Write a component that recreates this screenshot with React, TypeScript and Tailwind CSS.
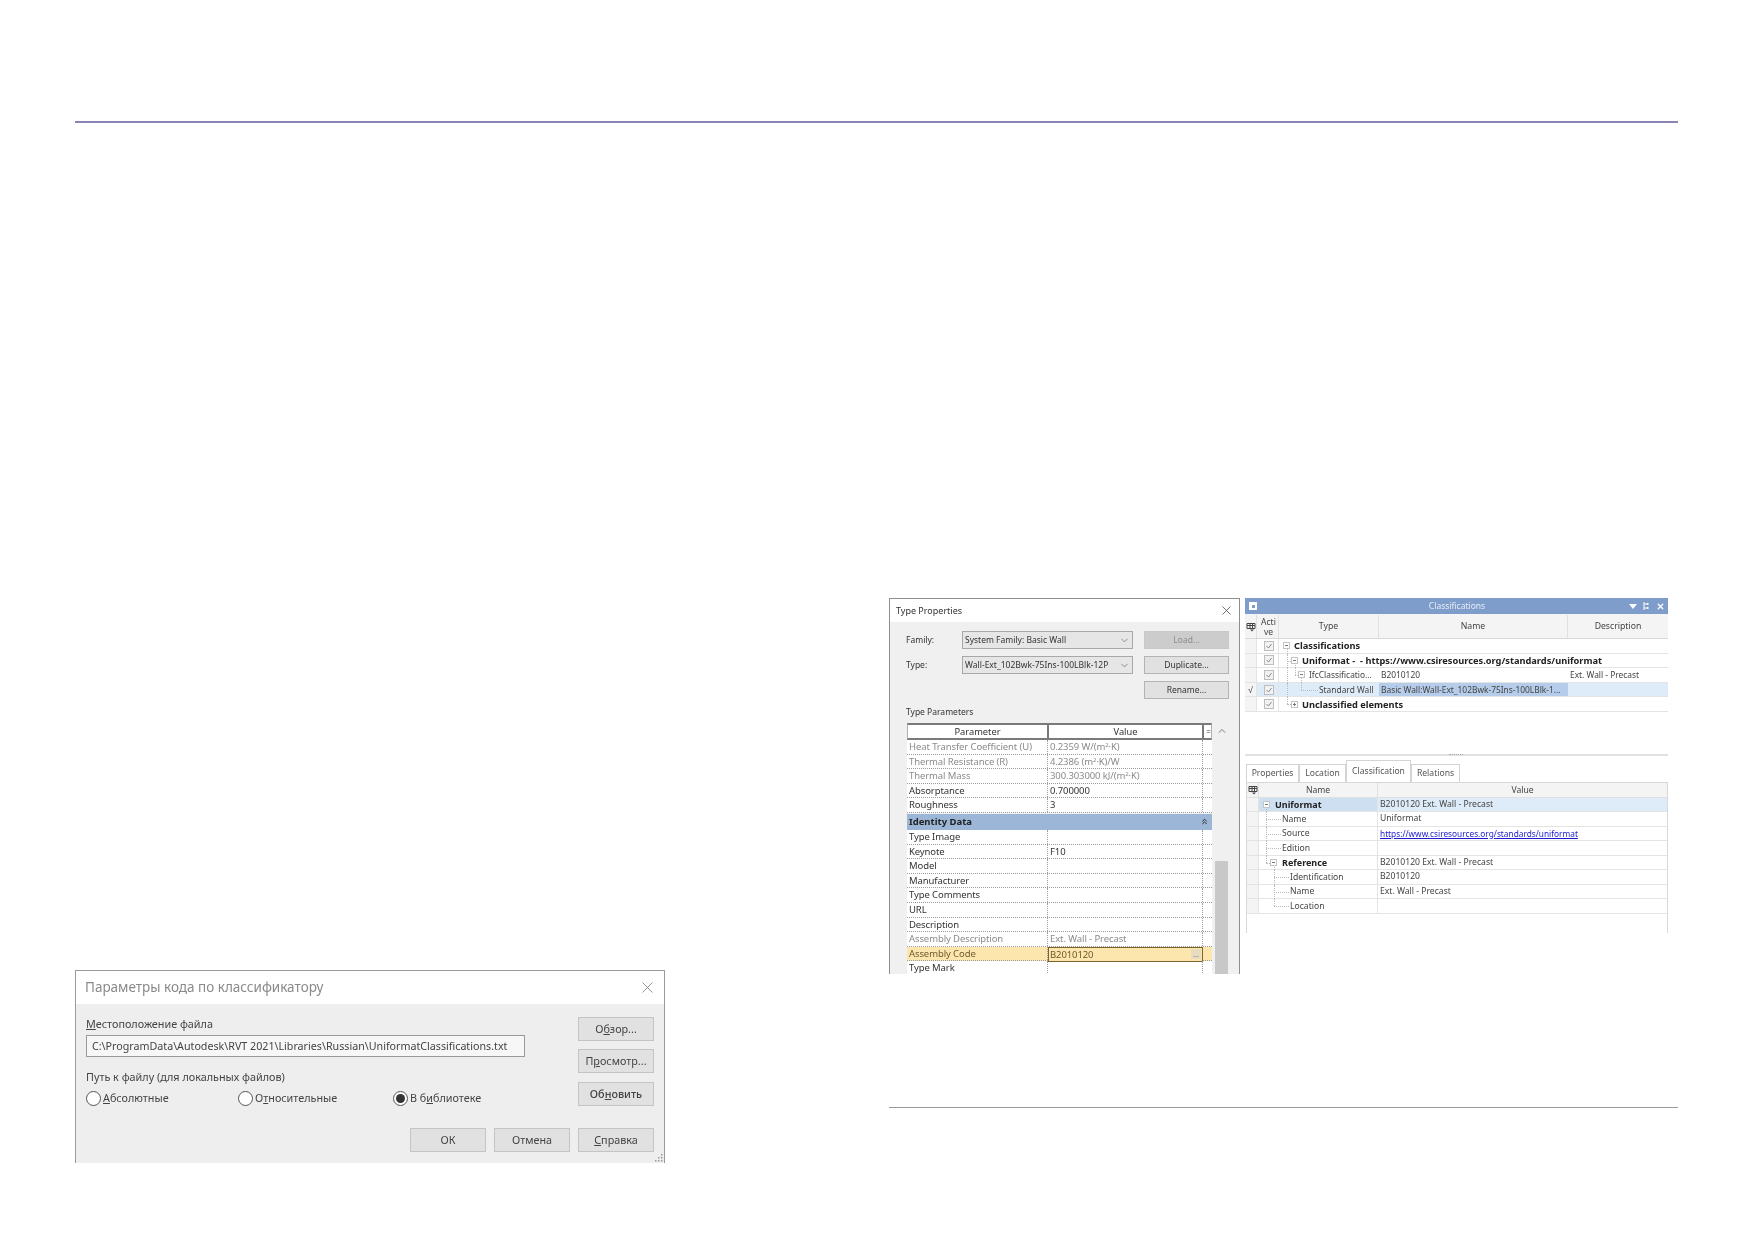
import { ChevronDown, ChevronUp, ChevronsUp, X } from "lucide-react";

const typeRows = [
  { name: "Heat Transfer Coefficient (U)", value: <>0.2359 W/(m<sup className="text-[6px]">2</sup>·K)</>, muted: true },
  { name: "Thermal Resistance (R)", value: <>4.2386 (m<sup className="text-[6px]">2</sup>·K)/W</>, muted: true },
  { name: "Thermal Mass", value: <>300.303000 kJ/(m<sup className="text-[6px]">2</sup>·K)</>, muted: true },
  { name: "Absorptance", value: "0.700000" },
  { name: "Roughness", value: "3" },
];

const identityRows = [
  { name: "Type Image", value: "" },
  { name: "Keynote", value: "F10" },
  { name: "Model", value: "" },
  { name: "Manufacturer", value: "" },
  { name: "Type Comments", value: "" },
  { name: "URL", value: "" },
  { name: "Description", value: "" },
  { name: "Assembly Description", value: "Ext. Wall - Precast", muted: true },
];

function DialogButton({ label, className }: { label: React.ReactNode; className: string }) {
  return (
    <div className={`flex h-[24px] w-[76px] items-center justify-center border border-[#c4c4c4] bg-[#e1e1e1] text-[10.8px] text-[#444] ${className}`}>
      {label}
    </div>
  );
}

function Radio({ label, checked, className }: { label: React.ReactNode; checked?: boolean; className: string }) {
  return (
    <div className={`flex items-center gap-[2px] ${className}`}>
      <span className="flex h-[15px] w-[15px] items-center justify-center rounded-full border border-[#555] bg-white">
        {checked && <span className="h-[9px] w-[9px] rounded-full bg-[#333]" />}
      </span>
      <span className="text-[10.8px] text-[#444]">{label}</span>
    </div>
  );
}

function ClassifierDialog() {
  return (
    <div className="relative h-[193px] w-[590px] border-x border-t border-[#9a9a9a] bg-[#eeeeee] blur-[0.4px]">
      <div className="flex h-[33px] items-center justify-between bg-white pl-[9px] pr-[7px]">
        <span className="text-[13.5px] text-[#8a8a8a]">Параметры кода по классификатору</span>
        <X size={19} strokeWidth={1} className="text-[#777]" />
      </div>
      <div className="flex pl-[10px] pr-[10px]">
        <div className="w-[492px]">
          <div className="mt-[12px] text-[10.8px] leading-[16px] text-[#444]"><u>М</u>естоположение файла</div>
          <div className="mt-[3px] flex h-[22px] w-[439px] items-center border border-[#999] bg-[#f7f7f7] pl-[5px] text-[10.7px] whitespace-nowrap text-[#444]">
            C:\ProgramData\Autodesk\RVT 2021\Libraries\Russian\UniformatClassifications.txt
          </div>
          <div className="mt-[12px] text-[10.8px] leading-[16px] text-[#444]">Путь к файлу (для локальных файлов)</div>
          <div className="mt-[5px] flex">
            <Radio className="w-[152px]" label={<><u>А</u>бсолютные</>} />
            <Radio className="w-[155px]" label={<>О<u>т</u>носительные</>} />
            <Radio className="w-[150px]" checked label={<>В б<u>и</u>блиотеке</>} />
          </div>
        </div>
        <div className="flex flex-col gap-[8px] pt-[13px]">
          <DialogButton className="" label={<>О<u>б</u>зор...</>} />
          <DialogButton className="" label={<>П<u>р</u>осмотр...</>} />
          <DialogButton className="mt-[1px] font-medium" label={<>Об<u>н</u>овить</>} />
        </div>
      </div>
      <div className="mt-[22px] flex justify-end gap-[8px] pr-[10px]">
        <DialogButton className="" label="ОК" />
        <DialogButton className="" label="Отмена" />
        <DialogButton className="" label={<><u>С</u>правка</>} />
      </div>
      <svg width="9" height="9" viewBox="0 0 9 9" className="absolute bottom-[1px] right-[1px] text-[#999]">
        <path d="M7 1h1.5v1.5H7zM4 4h1.5v1.5H4zM7 4h1.5v1.5H7zM1 7h1.5v1.5H1zM4 7h1.5v1.5H4zM7 7h1.5v1.5H7z" fill="currentColor" />
      </svg>
    </div>
  );
}

function FamilySelect({ value }: { value: string }) {
  return (
    <div className="flex h-[18px] w-[171px] items-center justify-between border border-[#a8a8a8] bg-[#e6e6e6] pl-[2px] pr-[2px] text-[8.5px] whitespace-nowrap text-[#333]">
      {value}
      <ChevronDown size={11} strokeWidth={1.5} className="text-[#666]" />
    </div>
  );
}

function SmallButton({ label, disabled }: { label: string; disabled?: boolean }) {
  return (
    <div className={`flex h-[18px] w-[85px] items-center justify-center border text-[8.5px] ${disabled ? "border-[#c8c8c8] bg-[#cccccc] text-[#8d8d8d]" : "border-[#b4b4b4] bg-[#e1e1e1] text-[#333]"}`}>
      {label}
    </div>
  );
}

function ParamRow({ name, value, muted, active }: { name: string; value?: React.ReactNode; muted?: boolean; active?: boolean }) {
  const text = muted ? "text-[#8b8b8b]" : "text-[#333]";
  return (
    <div className={`grid h-[14.6px] grid-cols-[141px_155px_9px] border-b border-dotted border-[#9c9c9c] text-[9.5px] leading-[13px] tracking-[-0.1px] ${active ? "bg-[#fde6ae] text-[#6d5a2e]" : `bg-white ${text}`}`}>
      <div className="border-r border-dotted border-[#9c9c9c] pl-[2px] whitespace-nowrap">{name}</div>
      {active ? (
        <div className="flex items-center justify-between border border-[#7a6428] bg-[#fde6ae] pl-[1px] pr-[1px]">
          {value}
          <span className="flex h-[10px] w-[10px] items-center justify-center bg-[#e8dcc0] text-[7px] text-[#888]">...</span>
        </div>
      ) : (
        <div className="border-r border-dotted border-[#9c9c9c] pl-[2px] whitespace-nowrap">{value}</div>
      )}
      <div />
    </div>
  );
}

function TypeProperties() {
  return (
    <div className="h-[376px] w-[351px] overflow-hidden border-x border-t border-[#8e8e8e] bg-[#f0f0f0] blur-[0.3px]">
      <div className="flex h-[23px] items-center justify-between bg-white pl-[6px] pr-[5px]">
        <span className="text-[9px] text-[#333]">Type Properties</span>
        <X size={15} strokeWidth={1.2} className="text-[#444]" />
      </div>
      <div className="flex pl-[16px] pt-[9px]">
        <div className="flex w-[228px] flex-col gap-[7px]">
          <div className="flex items-center">
            <span className="w-[56px] text-[8.5px] text-[#333]">Family:</span>
            <FamilySelect value="System Family: Basic Wall" />
          </div>
          <div className="flex items-center">
            <span className="w-[56px] text-[8.5px] text-[#333]">Type:</span>
            <FamilySelect value="Wall-Ext_102Bwk-75Ins-100LBlk-12P" />
          </div>
        </div>
        <div className="ml-[10px] flex flex-col gap-[7px]">
          <SmallButton label="Load..." disabled />
          <SmallButton label="Duplicate..." />
          <SmallButton label="Rename..." />
        </div>
      </div>
      <div className="mt-[6px] pl-[16px] text-[8.5px] leading-[14px] text-[#333]">Type Parameters</div>
      <div className="mt-[4px] flex pl-[17px]">
        <div className="w-[305px]">
          <div className="grid h-[17px] grid-cols-[141px_155px_9px] border-y-2 border-x border-y-[#7a7a7a] border-x-[#b0b0b0] bg-white text-center text-[9.3px] leading-[13px] text-[#333]">
            <div className="border-r-2 border-[#7a7a7a]">Parameter</div>
            <div className="border-r-2 border-[#7a7a7a]">Value</div>
            <div className="text-[8px]">=</div>
          </div>
          {typeRows.map((r) => (
            <ParamRow key={r.name} {...r} />
          ))}
          <div className="mt-[1px] flex h-[16px] items-center justify-between bg-[#9bb6d6] pl-[2px] pr-[3px] text-[9.5px] font-bold text-[#222]">
            Identity Data
            <ChevronsUp size={9} strokeWidth={2.5} />
          </div>
          {identityRows.map((r) => (
            <ParamRow key={r.name} {...r} />
          ))}
          <ParamRow name="Assembly Code" value="B2010120" active />
          <ParamRow name="Type Mark" value="" />
        </div>
        <div className="ml-[3px] flex h-[260px] w-[13px] flex-col">
          <ChevronUp size={12} strokeWidth={1.5} className="mx-auto mt-[2px] shrink-0 text-[#555]" />
          <div className="mt-[124px] flex-1 bg-[#c8c8c8]" />
        </div>
      </div>
    </div>
  );
}

function GridIcon() {
  return (
    <svg width="10" height="10" viewBox="0 0 10 10" className="text-[#444]">
      <path d="M1 1.5h8v5H1zM1 3.5h8M4 1.5v5M6.5 1.5v5" fill="none" stroke="currentColor" />
      <path d="M4 7.5h4L6 9.5z" fill="currentColor" />
    </svg>
  );
}

function Expander({ plus }: { plus?: boolean }) {
  return (
    <span className="relative z-10 flex h-[7px] w-[7px] shrink-0 items-center justify-center border border-[#c4c4c4] bg-white">
      <span className="h-[1px] w-[3px] bg-[#777]" />
      {plus && <span className="absolute h-[3px] w-[1px] bg-[#777]" />}
    </span>
  );
}

// dotted tree connectors, in px from the left of the cell
function Guides({ v = [], h = [] }: { v?: number[][]; h?: number[][] }) {
  return (
    <>
      {v.map(([x, y0, y1]) => (
        <span key={`v${x}`} className="absolute border-l border-dotted border-[#bbbbbb]" style={{ left: x, top: y0, height: y1 - y0 }} />
      ))}
      {h.map(([x0, x1]) => (
        <span key={`h${x0}`} className="absolute top-[7px] border-t border-dotted border-[#bbbbbb]" style={{ left: x0, width: x1 - x0 }} />
      ))}
    </>
  );
}

type TreeRowProps = {
  indent: number;
  label: string;
  bold?: boolean;
  expander?: boolean;
  plus?: boolean;
  name?: string;
  desc?: string;
  marker?: boolean;
  selected?: boolean;
  span?: boolean;
  v?: number[][];
  h?: number[][];
};

function TreeRow({ indent, label, bold, expander, plus, name, desc, marker, selected, span, v, h }: TreeRowProps) {
  return (
    <div className={`grid h-[14.6px] grid-cols-[12px_22px_100px_189px_100px] border-b border-[#e4e4e4] text-[8.4px] leading-[13px] text-[#444] ${selected ? "bg-[#deecf9]" : ""}`}>
      <div className="border-r border-[#e4e4e4] bg-[#f4f4f4] pl-[3px] text-[9px]">{marker && "√"}</div>
      <div className="flex items-center justify-center border-r border-[#e4e4e4] pl-[3px]">
        <span className="flex h-[10px] w-[10px] items-center justify-center border border-[#bdbdbd] bg-[#f2f2f2]">
          <svg width="8" height="8" viewBox="0 0 8 8"><path d="M1.5 4l2 2 3-4" fill="none" stroke="#8a8a8a" /></svg>
        </span>
      </div>
      {span ? (
        <div className={`relative col-span-3 flex items-center gap-[4px] whitespace-pre ${bold ? "text-[9.25px] font-bold text-[#222]" : ""}`} style={{ paddingLeft: indent }}>
          <Guides v={v} h={h} />
          {expander && <Expander plus={plus} />}
          {label}
        </div>
      ) : (
        <>
          <div className="relative flex items-center gap-[4px] whitespace-nowrap" style={{ paddingLeft: indent }}>
            <Guides v={v} h={h} />
            {expander && <Expander plus={plus} />}
            {label}
          </div>
          <div className={`pl-[2px] whitespace-nowrap ${selected ? "bg-[#b5cdea]" : ""}`}>{name}</div>
          <div className="pl-[2px] whitespace-nowrap">{desc}</div>
        </>
      )}
    </div>
  );
}

type PropRowProps = {
  indent: number;
  label: string;
  value?: string;
  bold?: boolean;
  expander?: boolean;
  selected?: boolean;
  link?: boolean;
  v?: number[][];
  h?: number[][];
};

function PropRow({ indent, label, value, bold, expander, selected, link, v, h }: PropRowProps) {
  return (
    <div className={`grid h-[14.5px] grid-cols-[12px_119px_1fr] border-b border-[#e4e4e4] text-[8.6px] leading-[13px] text-[#444] ${selected ? "bg-[#deecf9]" : ""}`}>
      <div className="border-r border-[#e4e4e4] bg-[#f4f4f4]" />
      <div className={`relative flex items-center gap-[5px] whitespace-nowrap border-r border-[#e4e4e4] ${bold ? "text-[9px] font-bold text-[#222]" : ""} ${selected ? "bg-[#cfdff2]" : ""}`} style={{ paddingLeft: indent }}>
        <Guides v={v} h={h} />
        {expander && <Expander />}
        {label}
      </div>
      <div className={`pl-[2px] whitespace-nowrap ${link ? "text-[8.3px] text-[#1a1ad0] underline" : ""}`}>{value}</div>
    </div>
  );
}

function ClassificationsPanel() {
  const tabs = [
    { label: "Properties", cls: "h-[18px] w-[53px]" },
    { label: "Location", cls: "h-[18px] w-[47px]" },
    { label: "Classification", cls: "h-[22px] w-[65px]" },
    { label: "Relations", cls: "h-[18px] w-[49px]" },
  ];
  return (
    <div className="w-[423px] bg-white blur-[0.3px]">
      <div className="grid h-[16px] grid-cols-[1fr_auto_1fr] items-center bg-[#7f9dcb] pl-[4px] pr-[3px] text-[8.5px] text-[#e6ecf6]">
        <span className="flex h-[8px] w-[8px] items-center justify-center bg-white"><span className="h-[3px] w-[3px] bg-[#7f9dcb]" /></span>
        <span>Classifications</span>
        <span className="flex items-center justify-end gap-[6px] text-white">
          <svg width="8" height="5" viewBox="0 0 8 5"><path d="M0 0h8L4 5z" fill="currentColor" /></svg>
          <svg width="7" height="8" viewBox="0 0 7 8"><path d="M1 0v8M1 2h5M1 6h5M4.5 1v2M4.5 5v2" fill="none" stroke="currentColor" /></svg>
          <X size={9} strokeWidth={3.5} />
        </span>
      </div>
      <div className="grid h-[25px] grid-cols-[12px_22px_100px_189px_100px] border-b border-[#d8d8d8] bg-[#f4f4f4] pt-[1px] text-center text-[8.7px] text-[#444]">
        <div className="flex items-center justify-center border-r border-[#e0e0e0]"><GridIcon /></div>
        <div className="flex items-center justify-center border-r border-[#e0e0e0] pl-[2px] text-[8.5px] leading-[10px]">Acti<br />ve</div>
        <div className="flex items-center justify-center border-r border-[#e0e0e0]">Type</div>
        <div className="flex items-center justify-center border-r border-[#e0e0e0]">Name</div>
        <div className="flex items-center justify-center">Description</div>
      </div>
      <TreeRow indent={4} label="Classifications" bold expander span v={[[8, 7, 14.6]]} />
      <TreeRow indent={12} label="Uniformat -  - https://www.csiresources.org/standards/uniformat" bold expander span v={[[8, 0, 14.6], [16, 7, 14.6]]} h={[[8, 12]]} />
      <TreeRow indent={19} label="IfcClassificatio..." expander name="B2010120" desc="Ext. Wall - Precast" v={[[8, 0, 14.6], [16, 0, 7], [22, 7, 14.6]]} h={[[16, 19]]} />
      <TreeRow indent={40} label="Standard Wall" name="Basic Wall:Wall-Ext_102Bwk-75Ins-100LBlk-1..." marker selected v={[[8, 0, 14.6], [22, 0, 7]]} h={[[22, 39]]} />
      <TreeRow indent={12} label="Unclassified elements" bold expander plus span v={[[8, 0, 7]]} h={[[8, 12]]} />
      <div className="relative h-[44px] border-b-2 border-[#e2e2e2]">
        <span className="absolute bottom-[-2px] left-[204px] h-[2px] w-[14px] border-t border-dotted border-[#aaa]" />
      </div>
      <div className="mt-[7px] flex h-[19px] items-end pl-[1px] text-[8.6px] text-[#555]">
        {tabs.map((t) => (
          <div key={t.label} className={`flex shrink-0 items-center justify-center border border-b-0 border-[#d4d4d4] bg-white ${t.cls}`}>
            {t.label}
          </div>
        ))}
      </div>
      <div className="ml-[1px] h-[151px] border-x border-t border-[#d8d8d8]">
        <div className="grid h-[15px] grid-cols-[12px_119px_1fr] border-b border-[#e0e0e0] bg-[#f4f4f4] text-center text-[8.6px] leading-[14px] text-[#444]">
          <div className="flex items-center justify-center border-r border-[#e0e0e0]"><GridIcon /></div>
          <div className="border-r border-[#e0e0e0]">Name</div>
          <div>Value</div>
        </div>
        <PropRow indent={4} label="Uniformat" value="B2010120 Ext. Wall - Precast" bold expander selected v={[[7, 7, 14.5]]} />
        <PropRow indent={23} label="Name" value="Uniformat" v={[[7, 0, 14.5]]} h={[[7, 22]]} />
        <PropRow indent={23} label="Source" value="https://www.csiresources.org/standards/uniformat" link v={[[7, 0, 14.5]]} h={[[7, 22]]} />
        <PropRow indent={23} label="Edition" v={[[7, 0, 14.5]]} h={[[7, 22]]} />
        <PropRow indent={11} label="Reference" value="B2010120 Ext. Wall - Precast" bold expander v={[[7, 0, 7], [15, 7, 14.5]]} h={[[7, 11]]} />
        <PropRow indent={31} label="Identification" value="B2010120" v={[[15, 0, 14.5]]} h={[[15, 30]]} />
        <PropRow indent={31} label="Name" value="Ext. Wall - Precast" v={[[15, 0, 14.5]]} h={[[15, 30]]} />
        <PropRow indent={31} label="Location" v={[[15, 0, 7]]} h={[[15, 30]]} />
      </div>
    </div>
  );
}

export default function App() {
  return (
    <div className="h-[1239px] w-[1752px] overflow-hidden bg-white pl-[75px] pt-[121px] font-['Noto_Sans',sans-serif]">
      <div className="h-[2px] w-[1603px] bg-[#8a86b4]" />
      <div className="flex">
        <div className="w-[814px] pt-[847px]">
          <ClassifierDialog />
        </div>
        <div className="w-[789px] pt-[475px]">
          <div className="flex items-start gap-[5px]">
            <TypeProperties />
            <ClassificationsPanel />
          </div>
          <div className="mt-[133px] h-[1px] bg-[#9a9a9a]" />
        </div>
      </div>
    </div>
  );
}
